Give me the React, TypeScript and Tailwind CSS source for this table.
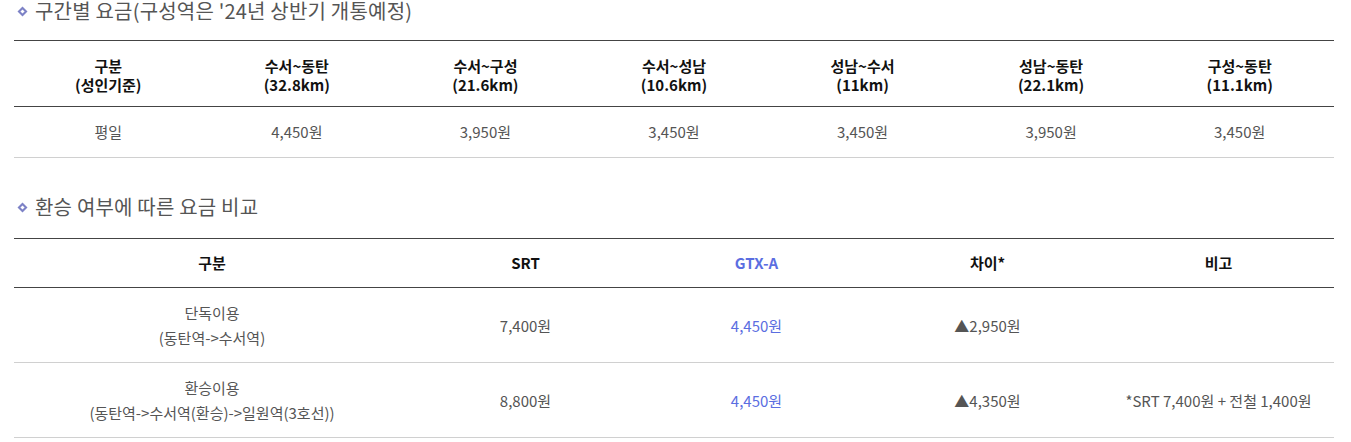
const font = { fontFamily: '"Noto Sans CJK KR", "Noto Sans", sans-serif' }

function Title({ children }: { children: React.ReactNode }) {
  return (
    <h3 className="flex items-center gap-[7px] text-[20px] leading-[22px] text-[#555] font-normal tracking-[0.2px]">
      <svg className="ml-[3px] shrink-0" width="11" height="11" viewBox="0 0 11 11">
        <path d="M5.5 0.5 L10.5 5.5 L5.5 10.5 L0.5 5.5 Z" fill="#7d82c6" />
        <rect x="4" y="4" width="3" height="3" fill="#fff" transform="rotate(45 5.5 5.5)" />
      </svg>
      {children}
    </h3>
  )
}

const sections = [
  ['수서~동탄', '(32.8km)', '4,450원'],
  ['수서~구성', '(21.6km)', '3,950원'],
  ['수서~성남', '(10.6km)', '3,450원'],
  ['성남~수서', '(11km)', '3,450원'],
  ['성남~동탄', '(22.1km)', '3,950원'],
  ['구성~동탄', '(11.1km)', '3,450원'],
]

export default function App() {
  return (
    <div className="bg-white w-[1351px] h-[442px] overflow-hidden px-[14px] pt-0" style={font}>
      <Title>구간별 요금(구성역은 '24년 상반기 개통예정)</Title>
      <table className="w-[1320px] mt-[18px] table-fixed border-collapse text-[15px] text-center">
        <thead>
          <tr className="border-t border-b border-[#444] h-[66px]">
            <th className="font-bold text-[#111] leading-[19px] pt-[2px]">
              구분
              <br />
              (성인기준)
            </th>
            {sections.map(s => (
              <th key={s[0]} className="font-bold text-[#111] leading-[19px] pt-[2px]">
                {s[0]}
                <br />
                {s[1]}
              </th>
            ))}
          </tr>
        </thead>
        <tbody>
          <tr className="border-b border-[#d0d0d0] h-[51px] text-[#555]">
            <td>평일</td>
            {sections.map(s => (
              <td key={s[0]}>{s[2]}</td>
            ))}
          </tr>
        </tbody>
      </table>

      <div className="mt-[38px]">
        <Title>환승 여부에 따른 요금 비교</Title>
      </div>
      <table className="w-[1320px] mt-[20px] table-fixed border-collapse text-[15px] text-center">
        <colgroup>
          <col className="w-[396px]" />
          <col className="w-[231px]" />
          <col className="w-[231px]" />
          <col className="w-[231px]" />
          <col className="w-[231px]" />
        </colgroup>
        <thead>
          <tr className="border-t border-b border-[#444] h-[49px]">
            <th className="font-bold text-[#111]">구분</th>
            <th className="font-bold text-[#111]">SRT</th>
            <th className="font-bold text-[#5b6ee1]">GTX-A</th>
            <th className="font-bold text-[#111]">차이*</th>
            <th className="font-bold text-[#111]">비고</th>
          </tr>
        </thead>
        <tbody className="text-[#555] leading-[25px]">
          <tr className="border-b border-[#d0d0d0] h-[75px]">
            <td>
              단독이용
              <br />
              (동탄역-&gt;수서역)
            </td>
            <td>7,400원</td>
            <td className="text-[#5b6ee1]">4,450원</td>
            <td>▲2,950원</td>
            <td></td>
          </tr>
          <tr className="border-b border-[#d0d0d0] h-[75px]">
            <td>
              환승이용
              <br />
              (동탄역-&gt;수서역(환승)-&gt;일원역(3호선))
            </td>
            <td>8,800원</td>
            <td className="text-[#5b6ee1]">4,450원</td>
            <td>▲4,350원</td>
            <td>*SRT 7,400원 + 전철 1,400원</td>
          </tr>
        </tbody>
      </table>
    </div>
  )
}
